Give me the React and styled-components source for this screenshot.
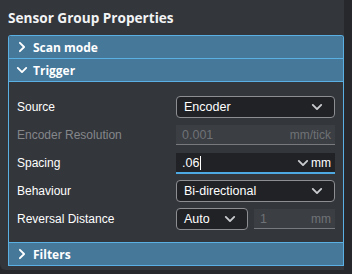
import React from 'react'
import styled, {createGlobalStyle} from 'styled-components'

const GlobalStyle = createGlobalStyle`
  html, body { margin: 0; padding: 0; background: #26282c; }
  body { width: 352px; height: 274px; overflow: hidden; }
`;

const Window = styled.div`
  width: 344px;
  height: 270px;
  background: #33363b;
  border-bottom-left-radius: 6px;
  box-sizing: border-box;
  padding: 0 0 0 8px;
  font-family: "Liberation Sans", Arial, sans-serif;
  color: #ffffff;
`;

const Title = styled.h1`
  margin: 0;
  height: 35px;
  line-height: 35px;
  font-family: "Open Sans", "Noto Sans", sans-serif;
  font-size: 13.6px;
  font-weight: 700;
  color: #f2f3f4;
`;

const Panel = styled.div`
  width: 336px;
  box-sizing: border-box;
  border: 1px solid #5aafe3;
  border-bottom: none;
  border-top-right-radius: 3px;
  border-top-left-radius: 3px;
  overflow: hidden;
`;

const Header = styled.div`
  display: flex;
  align-items: center;
  gap: 5px;
  height: 22px;
  padding-left: 7px;
  background: #46789a;
  border-bottom: 1px solid #5aafe3;
  font-family: "Open Sans", "Noto Sans", sans-serif;
  font-size: 12px;
  font-weight: 700;
  color: #ffffff;
  svg { flex: none; }
`;

const Body = styled.div`
  display: flex;
  flex-direction: column;
  gap: 6px;
  padding: 14px 8px 12px 8px;
  border-bottom: 1px solid #5aafe3;
`;

const Row = styled.div`
  display: grid;
  grid-template-columns: 159px 1fr;
  align-items: center;
  height: 22px;
`;

const Label = styled.span`
  font-size: 12px;
  color: ${props => props.disabled ? '#85878b' : '#ffffff'};
`;

const Controls = styled.div`
  display: flex;
  gap: 6px;
  height: 22px;
`;

const Select = styled.div`
  display: flex;
  align-items: center;
  justify-content: space-between;
  box-sizing: border-box;
  width: ${props => props.width || '100%'};
  height: 22px;
  padding: 0 11px 0 7px;
  background: #202226;
  border: 1px solid #8c8e92;
  border-radius: 4px;
  font-size: 12.5px;
  color: #ffffff;
`;

const Input = styled.div`
  display: flex;
  align-items: center;
  justify-content: space-between;
  box-sizing: border-box;
  flex: 1;
  height: ${props => props.disabled ? '20px' : '21px'};
  margin-top: 1px;
  padding: 0 4px 0 6px;
  background: ${props => props.disabled ? '#3b3e43' : '#202226'};
  border-bottom: ${props => props.disabled ? '1px solid #77797d' : '2px solid #4ea9e2'};
  font-size: 12.5px;
  color: ${props => props.disabled ? '#6f7276' : '#ffffff'};
`;

const Unit = styled.span`
  display: flex;
  align-items: center;
  gap: 2px;
  font-size: 12px;
  color: ${props => props.disabled ? '#6f7276' : '#ffffff'};
`;

const Caret = styled.span`
  display: inline-block;
  width: 1px;
  height: 14px;
  margin-left: 1px;
  vertical-align: -3px;
  background: #ffffff;
`;

const Chevron = ({down, color = '#ffffff', size = 12}) => (
    <svg width={size} height={size} viewBox="0 0 12 12" fill="none">
        {down
            ? <path d="M1.8 3.9 L6 8.1 L10.2 3.9" stroke={color} strokeWidth="1.9" strokeLinecap="round" strokeLinejoin="round"/>
            : <path d="M3.9 1.8 L8.1 6 L3.9 10.2" stroke={color} strokeWidth="1.9" strokeLinecap="round" strokeLinejoin="round"/>}
    </svg>
);

const SelectChevron = () => <Chevron down color="#c9cbce" size={12}/>;

export default function App() {
    return (
        <Window>
            <GlobalStyle/>
            <Title>Sensor Group Properties</Title>
            <Panel>
                <Header><Chevron/>Scan mode</Header>
                <Header><Chevron down/>Trigger</Header>
                <Body>
                    <Row>
                        <Label>Source</Label>
                        <Select>Encoder<SelectChevron/></Select>
                    </Row>
                    <Row>
                        <Label disabled>Encoder Resolution</Label>
                        <Controls>
                            <Input disabled>0.001<Unit disabled>mm/tick</Unit></Input>
                        </Controls>
                    </Row>
                    <Row>
                        <Label>Spacing</Label>
                        <Controls>
                            <Input><span>.06<Caret/></span><Unit><SelectChevron/>mm</Unit></Input>
                        </Controls>
                    </Row>
                    <Row>
                        <Label>Behaviour</Label>
                        <Select>Bi-directional<SelectChevron/></Select>
                    </Row>
                    <Row>
                        <Label>Reversal Distance</Label>
                        <Controls>
                            <Select width="72px">Auto<SelectChevron/></Select>
                            <Input disabled>1<Unit disabled>mm</Unit></Input>
                        </Controls>
                    </Row>
                </Body>
                <Header><Chevron/>Filters</Header>
            </Panel>
        </Window>
    );
}
